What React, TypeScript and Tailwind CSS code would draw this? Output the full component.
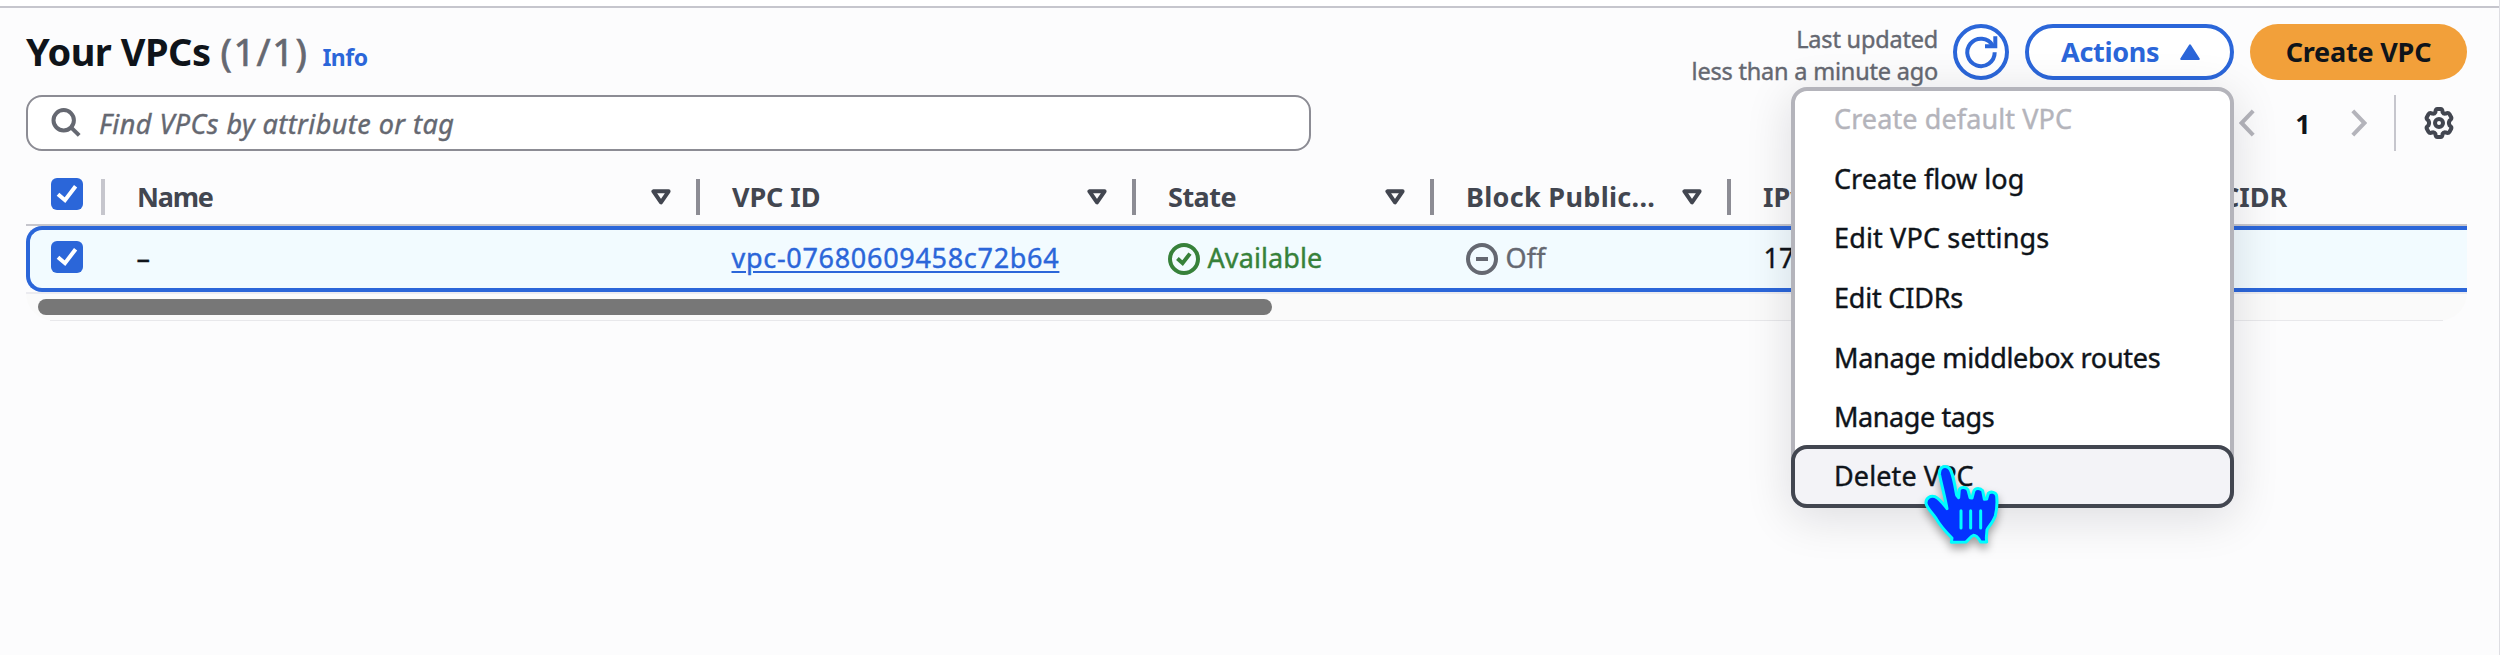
import type { ReactNode } from "react";

function Checkbox() {
  return (
    <span className="flex h-8 w-8 shrink-0 items-center justify-center rounded-[6px] bg-[#2b66d9]">
      <svg width="32" height="32" viewBox="0 0 32 32" fill="none" stroke="#fff" strokeWidth="4">
        <path d="M7 16.2 L14 22.2 L24.6 8.2" />
      </svg>
    </span>
  );
}

function SearchIcon() {
  return (
    <svg width="30" height="30" viewBox="0 0 30 30" fill="none" stroke="#656871" strokeWidth="4">
      <circle cx="12.7" cy="12.3" r="10.2" />
      <path d="M20 19.4 L28.2 27.4" />
    </svg>
  );
}

function FilterIcon() {
  return (
    <svg width="20" height="16" viewBox="0 0 20 16" fill="none" stroke="#424650" strokeWidth="4" strokeLinejoin="round">
      <path d="M2.4 2.3 H17.6 L10 13.4 Z" />
    </svg>
  );
}

function RefreshIcon() {
  return (
    <svg width="36" height="36" viewBox="0 0 36 36" fill="none" stroke="#2b66d9" strokeWidth="4">
      <path d="M31.7 18.3 A13.7 13.7 0 1 1 29.8 11.4" />
      <path d="M32.3 2.3 V12.3 H22" />
    </svg>
  );
}

function StatusOk() {
  return (
    <svg width="32" height="32" viewBox="0 0 32 32" fill="none" stroke="#37813a" strokeWidth="4">
      <circle cx="16" cy="16" r="14" />
      <path d="M9.4 15.6 L14.6 20.2 L22 10.6" />
    </svg>
  );
}

function StatusOff() {
  return (
    <svg width="32" height="32" viewBox="0 0 32 32" fill="none" stroke="#656871" strokeWidth="4">
      <circle cx="16" cy="16" r="14" />
      <path d="M10 16 H22" />
    </svg>
  );
}

function GearIcon() {
  return (
    <svg width="32" height="34" viewBox="0 0 32 34" fill="none" stroke="#424650" strokeWidth="4" strokeLinejoin="round">
      <circle cx="16" cy="17" r="4" />
      <path d="M12.4 6.2 Q12.6 3 14.4 3 H17.6 Q19.4 3 19.6 6.2 Q20.6 8 22.6 7.6 Q25.4 6.4 26.4 8 L28.2 11.2 Q29 12.8 26.6 14.6 Q25.2 17 26.6 19.4 Q29 21.2 28.2 22.8 L26.4 26 Q25.4 27.6 22.6 26.4 Q20.6 26 19.6 27.8 Q19.4 31 17.6 31 H14.4 Q12.6 31 12.4 27.8 Q11.4 26 9.4 26.4 Q6.6 27.6 5.6 26 L3.8 22.8 Q3 21.2 5.4 19.4 Q6.8 17 5.4 14.6 Q3 12.8 3.8 11.2 L5.6 8 Q6.6 6.4 9.4 7.6 Q11.4 8 12.4 6.2 Z" />
    </svg>
  );
}

function HandPointer() {
  return (
    <svg
      className="absolute left-[127px] top-[14px] z-10 drop-shadow-[0_5px_4px_rgba(0,0,0,0.35)]"
      width="80"
      height="86"
      viewBox="64 66 240 258"
      strokeLinecap="round"
      strokeLinejoin="round"
    >
      <path
        fill="#0433ff"
        stroke="#00fdff"
        strokeWidth="9"
        d="M152 304 L154 291 C136 274 117 252 104 229 C92 213 79 201 76 187 C75 171 89 163 103 167 C117 173 129 190 139 203 C134 172 121 125 117 102 C114 79 130 73 142 79 C156 86 160 122 168 163 L174 170 L176 146 C180 137 197 137 202 147 L208 170 L214 171 L220 149 C225 140 239 140 246 149 L251 175 L258 174 L263 157 C270 150 287 154 288 165 C290 186 289 205 284 224 C278 242 266 254 259 266 L257 291 L258 303 L240 303 C234 292 226 283 218 283 C210 285 205 296 196 303 Z"
      />
      <path stroke="#00fdff" strokeWidth="9" fill="none" d="M181 209 V261 M210 209 V261 M240 209 V261" />
    </svg>
  );
}

function HeaderCell({ width, filter, children }: { width: string; filter?: boolean; children: ReactNode }) {
  return (
    <div className={`flex h-full shrink-0 items-center pl-8 ${width}`}>
      <span className="grow whitespace-nowrap pb-px font-bold text-[#424650]">{children}</span>
      {filter && (
        <>
          <FilterIcon />
          <span className="ml-[25px] h-9 w-1 bg-[#8c8c94]" />
        </>
      )}
    </div>
  );
}

const menuItem = "flex h-[59.6px] items-center pl-[39px] whitespace-nowrap";

export default function App() {
  return (
    <div className="h-[655px] w-[2500px] overflow-hidden border-r border-[#dedee3] bg-[#fcfcfd] font-['Noto_Sans','Open_Sans',sans-serif] text-[27px] leading-none text-[#0f141a]">
      <div className="h-2 border-b-2 border-[#c6c6cd] bg-white" />
      <main className="pl-[26px] pr-8 pt-4">
        <header className="flex h-14 items-center">
          <div className="flex items-baseline pb-0.5">
            <h1 className="text-[38px] font-bold tracking-[-0.5px]">Your VPCs</h1>
            <span className="ml-[10px] text-[38px] tracking-[1.5px] text-[#656871] [-webkit-text-stroke:0.7px]">(1/1)</span>
            <a className="ml-[14px] text-[23px] font-bold tracking-[-0.5px] text-[#2b66d9]">Info</a>
          </div>
          <div className="ml-auto flex items-center gap-4">
            <p className="-mr-px pt-[7px] text-right text-[23.5px] leading-[31.4px] tracking-[-0.2px] text-[#656871] [-webkit-text-stroke:0.4px]">
              Last updated
              <br />
              less than a minute ago
            </p>
            <button className="flex h-14 w-14 items-center justify-center rounded-full border-4 border-[#2b66d9] bg-white">
              <RefreshIcon />
            </button>
            <div className="relative">
              <button className="flex h-14 w-[209px] items-center rounded-full border-4 border-[#2b66d9] bg-white pl-8 font-bold tracking-[-0.3px] text-[#2b66d9]">
                <span className="pb-0.5">Actions</span>
                <svg className="ml-[21px]" width="20" height="16" viewBox="0 0 20 16" fill="#2b66d9" stroke="#2b66d9" strokeWidth="2" strokeLinejoin="round">
                  <path d="M10 1.4 L18.8 15 H1.2 Z" />
                </svg>
              </button>
              <ul className="absolute right-0 top-[63px] z-10 w-[443px] rounded-2xl border-4 border-[#b4b4bb] bg-white shadow-[0_9px_46px_2px_rgba(0,7,22,0.12)] [-webkit-text-stroke:0.4px]">
                <li className={`${menuItem} -mt-0.5 tracking-[0.1px] text-[#b4b4bb]`}>Create default VPC</li>
                <li className={menuItem}>Create flow log</li>
                <li className={`${menuItem} tracking-[0.15px]`}>Edit VPC settings</li>
                <li className={`${menuItem} tracking-[-0.2px]`}>Edit CIDRs</li>
                <li className={`${menuItem} tracking-[-0.3px]`}>Manage middlebox routes</li>
                <li className={`${menuItem} tracking-[-0.4px]`}>Manage tags</li>
                <li className="relative -mx-1 -mb-1 -mt-0.5 flex h-[63px] items-center whitespace-nowrap rounded-2xl border-4 border-[#424650] bg-[#f3f3f7] pb-px pl-[39px] tracking-[0.1px]">
                  Delete VPC
                  <HandPointer />
                </li>
              </ul>
            </div>
            <button className="h-14 w-[217px] rounded-full bg-[#f2a03a] pb-0.5 font-bold tracking-[-0.2px]">Create VPC</button>
          </div>
        </header>

        <div className="mt-[15px] flex h-14 items-center">
          <div className="flex h-14 w-[1285px] items-center rounded-2xl border-2 border-[#8c8c94] bg-white pl-[23px] italic tracking-[0.45px] text-[#656871]">
            <SearchIcon />
            <span className="ml-[18px] [-webkit-text-stroke:0.4px]">Find VPCs by attribute or tag</span>
          </div>
          <div className="ml-auto flex h-full items-center pr-3">
            <svg width="16" height="28" viewBox="0 0 16 28" fill="none" stroke="#b4b4bb" strokeWidth="4">
              <path d="M14.2 1.8 L2.6 14 L14.2 26.2" />
            </svg>
            <span className="w-[96px] text-center font-bold">1</span>
            <svg width="16" height="28" viewBox="0 0 16 28" fill="none" stroke="#b4b4bb" strokeWidth="4">
              <path d="M1.8 1.8 L13.4 14 L1.8 26.2" />
            </svg>
            <span className="ml-[27px] h-full w-0.5 bg-[#c6c6cd]" />
            <span className="ml-[27px]">
              <GearIcon />
            </span>
          </div>
        </div>

        <section>
          <div className="mt-[18px] flex h-[55px] items-center overflow-hidden">
            <div className="flex h-full w-[79px] shrink-0 items-center pl-[24.5px]">
              <span className="-mt-[5px]">
                <Checkbox />
              </span>
              <span className="ml-[18.5px] h-9 w-1 bg-[#c6c6cd]" />
            </div>
            <HeaderCell width="w-[595px] tracking-[-1.2px]" filter>Name</HeaderCell>
            <HeaderCell width="w-[436px] tracking-[-0.1px]" filter>VPC ID</HeaderCell>
            <HeaderCell width="w-[298px] tracking-[-0.5px]" filter>State</HeaderCell>
            <HeaderCell width="w-[297px] tracking-[0.3px]" filter>Block Public...</HeaderCell>
            <HeaderCell width="w-[491px]">IPv4</HeaderCell>
            <span className="pb-px font-bold text-[#424650]">CIDR</span>
          </div>
          <div className="h-0.5 bg-[#c6c6cd]" />
          <div className="flex h-[66px] items-center rounded-l-2xl border-y-4 border-l-4 border-[#2b66d9] bg-[#f2fbff] pl-[20.5px]">
            <div className="-mt-1 w-[54px]">
              <Checkbox />
            </div>
            <div className="w-[595px] pb-[3px] pl-8 [-webkit-text-stroke:0.4px]">–</div>
            <div className="w-[436px] pb-[3px] pl-8">
              <a className="tracking-[0.7px] text-[#2b66d9] underline decoration-2 underline-offset-[3px] [-webkit-text-stroke:0.4px]">
                vpc-07680609458c72b64
              </a>
            </div>
            <div className="flex w-[298px] items-center gap-2 pl-8 tracking-[0.1px] text-[#37813a] [-webkit-text-stroke:0.4px]">
              <StatusOk />
              <span className="pb-[3px]">Available</span>
            </div>
            <div className="flex w-[297px] items-center gap-2 pl-8 tracking-[0.2px] text-[#656871] [-webkit-text-stroke:0.4px]">
              <StatusOff />
              <span className="pb-[3px]">Off</span>
            </div>
            <div className="pb-[3px] pl-[33px] [-webkit-text-stroke:0.4px]">172</div>
          </div>
          <div className="h-[29px] rounded-b-[28px] border-t-2 border-t-[#ebebf0] bg-[#fafafa] pl-3 pt-[5px]">
            <div className="h-4 w-[1234px] rounded-full bg-[#777]" />
          </div>
          <div className="-mt-px ml-6 mr-6 h-px bg-[#e8e8eb]" />
        </section>
      </main>
    </div>
  );
}
